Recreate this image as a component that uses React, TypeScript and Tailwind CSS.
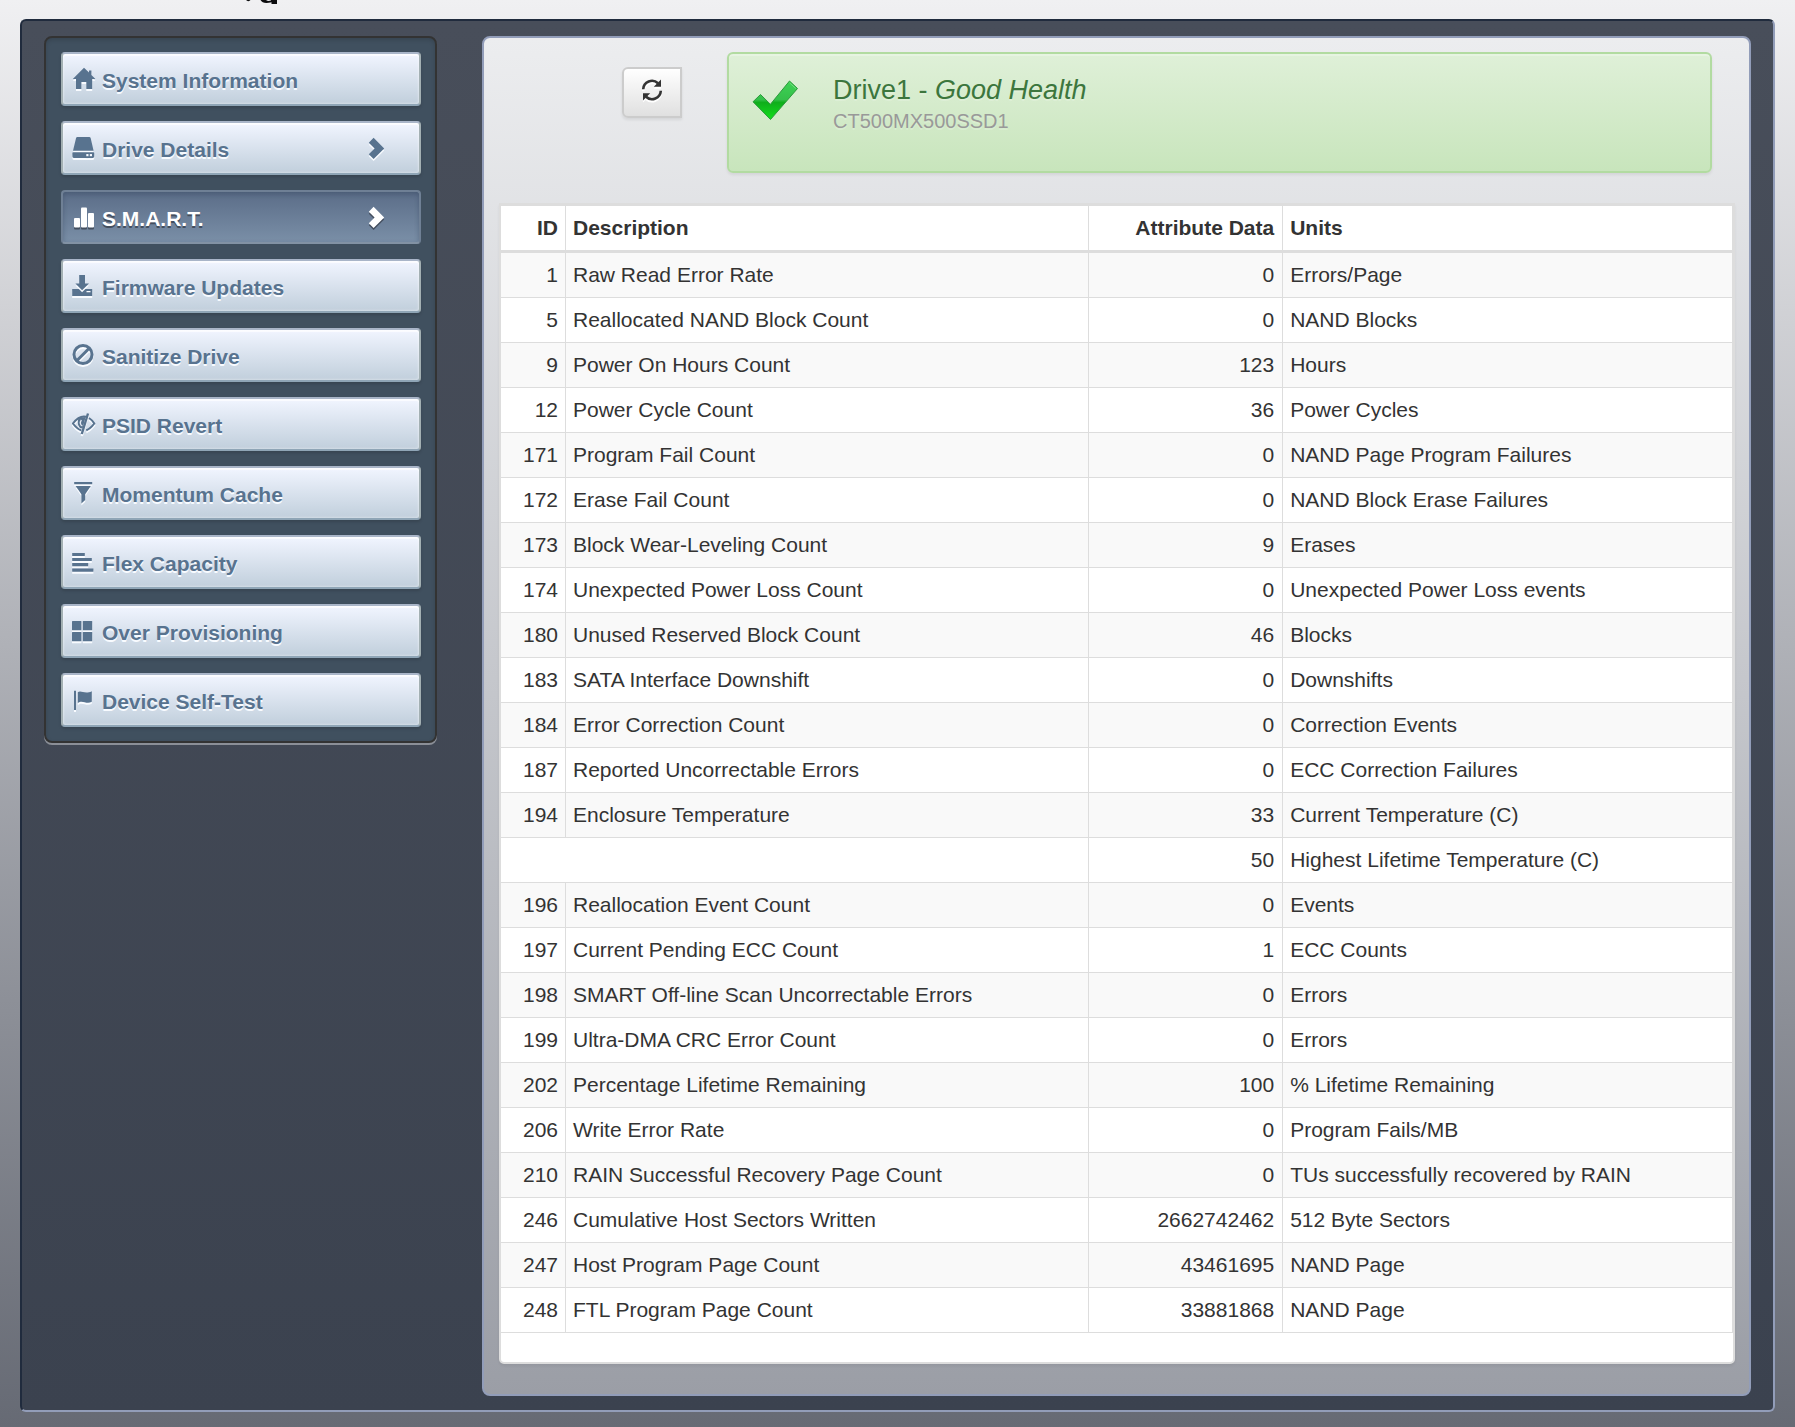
import React from "react";

type IconName =
  | "home"
  | "drive"
  | "stats"
  | "save"
  | "ban"
  | "eyeClose"
  | "filter"
  | "align"
  | "grid"
  | "flag";

const icons: Record<IconName, React.ReactNode> = {
  home: <path d="M12 0.8 17 5.6V3.6H19.4V8L23.4 12H20.2V22H14.3V15H9.4V22H4V12H0.8Z" />,
  drive: (
    <path
      fillRule="evenodd"
      d="M5.4 1H17.2Q18.4 1 18.7 2.2L21.6 14.8H1L4 2.2Q4.300 1 5.400 1ZM1.200 16.200H21.400Q22.200 16.200 22.200 17V20.600Q22.200 22 20.800 22H1.800Q0.400 22 0.400 20.600V17Q0.400 16.200 1.200 16.200ZM14.300 18V20.200H16.500V18ZM17.800 18V20.200H20V18Z"
    />
  ),
  stats: (
    <>
      <rect x="2" y="13" width="6" height="9.500" rx="1" />
      <rect x="9" y="2.500" width="6" height="20" rx="1" />
      <rect x="16" y="8" width="6" height="14.500" rx="1" />
    </>
  ),
  save: (
    <path
      fillRule="evenodd"
      d="M7.200 1H13V9.500H17L10.100 16.200 3.400 9.500H7.200ZM0.200 15H6.800L10.100 18.200 13.400 15H20.200V22H0.200ZM14.500 17V18.200H18.500V17Z"
    />
  ),
  ban: (
    <g fill="none" stroke="currentColor" strokeWidth="3">
      <circle cx="11" cy="11.500" r="9" />
      <path d="M4.800 17.800 17.200 5.300" />
    </g>
  ),
  eyeClose: (
    <g fill="none" stroke="currentColor" strokeWidth="2">
      <path d="M16 1.500 9.800 22" strokeWidth="2.400" />
      <path d="M14 4.800C8 3.400 4 7.500 0.900 11.500 3.200 14.500 5.600 17.200 9.400 18.400" />
      <path d="M17 6C19.200 7.300 20.800 9.300 22.300 11.500 20.300 14.200 17.800 17 14.300 18.200" />
      <path
        d="M7 5.800C5.200 8.300 5.200 13.600 8.200 16.200L10.600 16.600 13.600 5Z"
        fill="currentColor"
        stroke="none"
      />
      <path d="M9.400 8C7.600 10.400 8.200 13 10.400 14" stroke="#e3e9f3" strokeWidth="1.300" />
    </g>
  ),
  filter: <path d="M2.200 1H20.200V3.300H2.200ZM3.600 5H18.800L13.200 13.200V19L9.400 22.500V13.200Z" />,
  align: (
    <path d="M0.200 3H12.800V6H0.200ZM0.200 8H19.800V11H0.200ZM0.200 13H16.200V16.200H0.200ZM0.200 18.600H21.400V21.800H0.200Z" />
  ),
  grid: (
    <>
      <rect x="0" y="2" width="9.400" height="9.200" rx="0.500" />
      <rect x="10.800" y="2" width="9.400" height="9.200" rx="0.500" />
      <rect x="0" y="13" width="9.400" height="9.200" rx="0.500" />
      <rect x="10.800" y="13" width="9.400" height="9.200" rx="0.500" />
    </>
  ),
  flag: (
    <path d="M2 2.800H4V22H2ZM5.800 4.300C9 1.600 12.500 6.800 19.800 3.200V13.800C14.500 17 10.500 11.500 5.800 15Z" />
  ),
};

interface MenuItem {
  label: string;
  icon: IconName;
  arrow?: boolean;
  active?: boolean;
}

const menu: MenuItem[] = [
  { label: "System Information", icon: "home" },
  { label: "Drive Details", icon: "drive", arrow: true },
  { label: "S.M.A.R.T.", icon: "stats", arrow: true, active: true },
  { label: "Firmware Updates", icon: "save" },
  { label: "Sanitize Drive", icon: "ban" },
  { label: "PSID Revert", icon: "eyeClose" },
  { label: "Momentum Cache", icon: "filter" },
  { label: "Flex Capacity", icon: "align" },
  { label: "Over Provisioning", icon: "grid" },
  { label: "Device Self-Test", icon: "flag" },
];

type Row = [id: string, description: string, data: string, units: string];

const rows: Row[] = [
  ["1", "Raw Read Error Rate", "0", "Errors/Page"],
  ["5", "Reallocated NAND Block Count", "0", "NAND Blocks"],
  ["9", "Power On Hours Count", "123", "Hours"],
  ["12", "Power Cycle Count", "36", "Power Cycles"],
  ["171", "Program Fail Count", "0", "NAND Page Program Failures"],
  ["172", "Erase Fail Count", "0", "NAND Block Erase Failures"],
  ["173", "Block Wear-Leveling Count", "9", "Erases"],
  ["174", "Unexpected Power Loss Count", "0", "Unexpected Power Loss events"],
  ["180", "Unused Reserved Block Count", "46", "Blocks"],
  ["183", "SATA Interface Downshift", "0", "Downshifts"],
  ["184", "Error Correction Count", "0", "Correction Events"],
  ["187", "Reported Uncorrectable Errors", "0", "ECC Correction Failures"],
  ["194", "Enclosure Temperature", "33", "Current Temperature (C)"],
  ["", "", "50", "Highest Lifetime Temperature (C)"],
  ["196", "Reallocation Event Count", "0", "Events"],
  ["197", "Current Pending ECC Count", "1", "ECC Counts"],
  ["198", "SMART Off-line Scan Uncorrectable Errors", "0", "Errors"],
  ["199", "Ultra-DMA CRC Error Count", "0", "Errors"],
  ["202", "Percentage Lifetime Remaining", "100", "% Lifetime Remaining"],
  ["206", "Write Error Rate", "0", "Program Fails/MB"],
  ["210", "RAIN Successful Recovery Page Count", "0", "TUs successfully recovered by RAIN"],
  ["246", "Cumulative Host Sectors Written", "2662742462", "512 Byte Sectors"],
  ["247", "Host Program Page Count", "43461695", "NAND Page"],
  ["248", "FTL Program Page Count", "33881868", "NAND Page"],
];

function MenuButton({ label, icon, arrow, active }: MenuItem) {
  const look = active
    ? "border-[#6f8095] border-b-[#8292a4] bg-linear-to-b from-[#5b6d88] to-[#7a8fa7] text-white shadow-[inset_0_2px_5px_rgba(30,45,70,0.3)] [text-shadow:0_2px_0_#434e5e]"
    : "border-x-[#a3b0b3] border-t-[#a9b5c8] border-b-[#8fa5b6] bg-linear-to-b from-[#f1f5ff] to-[#c1cfdc] text-[#58738f] shadow-[inset_0_2px_1px_rgba(255,255,255,0.7),inset_0_0_3px_rgba(255,255,255,0.6),0_2px_3px_rgba(0,0,0,0.15)] [text-shadow:0_2px_0_#f8fbff]";
  const iconShadow = active
    ? "drop-shadow-[0_2px_0_#434e5e]"
    : "drop-shadow-[0_2px_0_#f8fbff]";
  return (
    <button
      type="button"
      aria-current={active ? "page" : undefined}
      className={`flex h-[54px] w-full items-center rounded-[4px] border-2 pr-[34px] pl-[9px] text-left text-[21px] leading-[30px] font-bold ${look}`}
    >
      <svg
        viewBox="0 0 24 24"
        fill="currentColor"
        aria-hidden="true"
        className={`mr-[6px] size-6 shrink-0 ${iconShadow}`}
      >
        {icons[icon]}
      </svg>
      <span className="flex-1 pt-[3px] whitespace-nowrap">{label}</span>
      {arrow && (
        <svg
          viewBox="0 0 17 24"
          fill="currentColor"
          aria-hidden="true"
          className={`h-6 w-[17px] shrink-0 ${iconShadow}`}
        >
          <path d="M5.600 1.800 16.200 12.500 5.600 23.100 0.800 18.300 6.600 12.500 0.800 6.700Z" />
        </svg>
      )}
    </button>
  );
}

function DriveHealth() {
  return (
    <section className="mr-[23px] flex h-[121px] flex-1 rounded-[6px] border-2 border-[#b2dba1] bg-linear-to-b from-[#dff0d8] to-[#c8e5bc] pl-[23px] shadow-[inset_0_2px_0_rgba(255,255,255,0.25),0_2px_3px_rgba(0,0,0,0.07)]">
      <svg viewBox="0 0 48 42" aria-hidden="true" className="mt-[26px] mr-[33px] h-[42px] w-12 shrink-0">
        <defs>
          <linearGradient id="tick" x1="0" y1="0" x2="0" y2="1">
            <stop offset="0" stopColor="#3fd255" />
            <stop offset="0.480" stopColor="#35c04a" />
            <stop offset="0.560" stopColor="#0fae1b" />
            <stop offset="1" stopColor="#12e01c" />
          </linearGradient>
        </defs>
        <path
          d="M37.500 1 45.500 8.500 18.500 39.500 1 21.800 8.500 14.500 18.400 24.300Z"
          fill="url(#tick)"
          stroke="#2c9a3c"
          strokeWidth="1"
          strokeLinejoin="round"
        />
        <path d="M37.500 2.800 43.800 8.500" fill="none" stroke="#72df80" strokeWidth="1" />
      </svg>
      <div className="pt-[19px] [text-shadow:0_2px_0_rgba(255,255,255,0.2)]">
        <h1 className="text-[27px] leading-[34px] text-[#3c763d]">
          Drive1 - <em>Good Health</em>
        </h1>
        <p className="text-[20px] leading-7 text-[#999]">CT500MX500SSD1</p>
      </div>
    </section>
  );
}

function SmartTable() {
  const line = "border-[#ddd]";
  return (
    <div className="overflow-hidden rounded-b-[5px] border-2 border-t-[3px] border-[#ddd] bg-white pb-[29px] shadow-[0_2px_3px_rgba(0,0,0,0.06)]">
      <table className="w-full table-fixed border-separate border-spacing-0 border-r border-[#ddd] text-[21px] leading-[30px] text-[#333]">
        <colgroup>
          <col className="w-[65px]" />
          <col className="w-[42.5%]" />
          <col className="w-[194px]" />
          <col />
        </colgroup>
        <thead>
          <tr className="h-[47px]">
            <th scope="col" className={`border-r border-b-[3px] px-[7px] text-right ${line}`}>ID</th>
            <th scope="col" className={`border-r border-b-[3px] px-[7px] text-left ${line}`}>Description</th>
            <th scope="col" className={`border-r border-b-[3px] px-2 text-right ${line}`}>Attribute Data</th>
            <th scope="col" className={`border-b-[3px] px-[7px] text-left ${line}`}>Units</th>
          </tr>
        </thead>
        <tbody>
          {rows.map(([id, description, data, units], i) => (
            <tr key={i} className="h-[45px] odd:bg-[#f9f9f9]">
              {id ? (
                <>
                  <td className={`border-r border-b px-[7px] text-right ${line}`}>{id}</td>
                  <td className={`border-r border-b px-[7px] ${line}`}>{description}</td>
                </>
              ) : (
                <td colSpan={2} className={`border-r border-b ${line}`} />
              )}
              <td className={`border-r border-b px-2 text-right ${line}`}>{data}</td>
              <td className={`border-b px-[7px] ${line}`}>{units}</td>
            </tr>
          ))}
        </tbody>
      </table>
    </div>
  );
}

export default function App() {
  return (
    <div className="min-h-screen bg-linear-to-b from-[#f0f0f2] to-[#666a74] px-5 pb-[15px] font-['Liberation_Sans',Arial,sans-serif]">
      <header className="h-[19px]">
        <svg viewBox="0 0 34 5" aria-hidden="true" className="ml-[225px] h-[5px] w-[34px]">
          <path d="M1 0H5.500Q4.500 1.500 2.500 1ZM15.500 0H21Q23 1.800 26 0.600V0H32V4H26.500V2.200Q18 4.600 15.500 0Z" fill="#0c0c0e" />
        </svg>
      </header>
      <div className="flex items-start rounded-[6px] border-2 border-t-[#202b3d] border-r-[#929db9] border-b-[#929db9] border-l-[#202b3d] bg-linear-to-b from-[#484e5a] to-[#3b424f] px-[22px] pt-[15px] pb-[14px]">
        <nav className="mr-[45px] flex w-[393px] shrink-0 flex-col gap-[15px] rounded-[8px] border-2 border-[#333] bg-[#40505f] py-[14px] pr-[14px] pl-[15px] shadow-[inset_0_2px_4px_rgba(0,0,0,0.15),0_2px_0_#8b8f97]">
          {menu.map((item) => (
            <MenuButton key={item.label} {...item} />
          ))}
        </nav>
        <main className="min-w-0 flex-1 rounded-[8px] border-2 border-[#929db9] bg-linear-to-b from-[#ecedef] to-[#9b9ea6] pt-[14px] pr-[14px] pb-[30px] pl-[15px]">
          <div className="mb-[30px] flex items-start">
            <div className="flex w-[228px] shrink-0 justify-end pt-[15px] pr-[45px]">
              <button
                type="button"
                aria-label="Refresh"
                className="flex h-[51px] w-[60px] items-center justify-center rounded-l-[6px] border-2 border-[#ccc] bg-linear-to-b from-white to-[#e0e0e0] text-[#333] shadow-[0_2px_3px_rgba(0,0,0,0.08)]"
              >
                <svg
                  viewBox="0 0 22 24"
                  aria-hidden="true"
                  className="mb-[5px] h-6 w-[22px] drop-shadow-[0_2px_0_#fff]"
                >
                  <g fill="none" stroke="currentColor" strokeWidth="2.600">
                    <path d="M2.200 11.200A8.800 8.800 0 0 1 17 5.200" />
                    <path d="M19.800 12.800A8.800 8.800 0 0 1 5 18.800" />
                  </g>
                  <path d="M20 1.500V8.800H12.800ZM2 22.500V15.200H9.200Z" fill="currentColor" />
                </svg>
              </button>
            </div>
            <DriveHealth />
          </div>
          <SmartTable />
        </main>
      </div>
    </div>
  );
}
